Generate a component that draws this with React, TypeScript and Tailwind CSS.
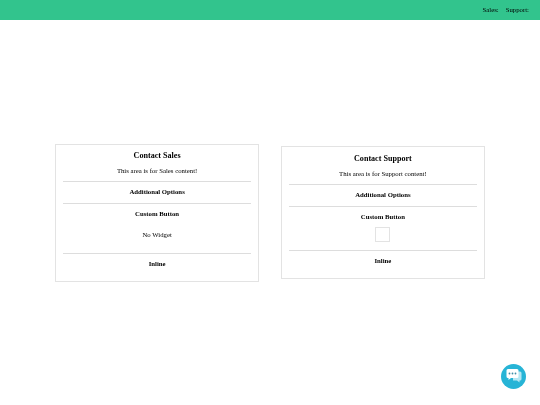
export default function App() {
  return <Page />;
}

const serif = "font-['Liberation_Serif',serif] text-black";

function Divider() {
  return <div className="h-px bg-[#ddd]" />;
}

function ContactCard({ name, widget }: { name: string; widget: boolean }) {
  return (
    <div className={`w-[203.5px] border border-[#e3e3e3] px-[6.5px] pt-[5.5px] pb-[12px] text-center ${serif}`}>
      <h2 className="text-[8.1px] leading-[11px] font-bold">Contact {name}</h2>
      <p className="mt-[4px] mb-[5px] text-[6.75px] leading-[11px]">This area is for {name} content!</p>
      <Divider />
      <div className="pt-[4px] pb-[6px] text-[6.75px] leading-[11px] font-bold">Additional Options</div>
      <Divider />
      <div className="pt-[4px] text-[6.75px] leading-[11px] font-bold">Custom Button</div>
      {widget ? (
        <div className="flex justify-center pt-[5px] pb-[8.3px]">
          <div className="h-[15px] w-[15px] border border-[#e3e3e3]" />
        </div>
      ) : (
        <div className="pt-[10px] pb-[13px] text-[6.75px] leading-[11px]">No Widget</div>
      )}
      <Divider />
      <div className="pt-[3.5px] text-[6.75px] leading-[11px] font-bold">Inline</div>
    </div>
  );
}

function Page() {
  return (
    <div className="relative flex h-[405px] w-[540px] flex-col overflow-hidden bg-white">
      <header className="h-5 bg-[#32c48d]">
        <nav className={`flex h-5 items-center justify-end gap-[7px] pr-[11px] text-[6.75px] will-change-transform ${serif}`}>
          <span>Sales:</span>
          <span>Support:</span>
        </nav>
      </header>
      <main className="flex flex-1 items-center justify-center gap-[22.3px] will-change-transform">
        <ContactCard name="Sales" widget={false} />
        <ContactCard name="Support" widget />
      </main>
      <button className="absolute top-[364px] left-[501px] h-[25px] w-[25px] rounded-full bg-[#27b4d6]">
        <svg width="25" height="25" viewBox="0 0 25 25">
          <path d="M12 7.500h7a1.500 1.500 0 0 1 1.500 1.500v6a1.500 1.500 0 0 1-1.500 1.500h-.5v2l-2.500-2h-4z" fill="#b5e7f3" />
          <path d="M7 5h9a1.500 1.500 0 0 1 1.500 1.500v6A1.500 1.500 0 0 1 16 14h-6l-2.500 2v-2H7a1.500 1.500 0 0 1-1.500-1.500v-6A1.500 1.500 0 0 1 7 5z" fill="#fff" />
          <circle cx="8.500" cy="9.500" r=".9" fill="#3f8fa8" />
          <circle cx="11.500" cy="9.500" r=".9" fill="#3f8fa8" />
          <circle cx="14.500" cy="9.500" r=".9" fill="#3f8fa8" />
        </svg>
      </button>
    </div>
  );
}
